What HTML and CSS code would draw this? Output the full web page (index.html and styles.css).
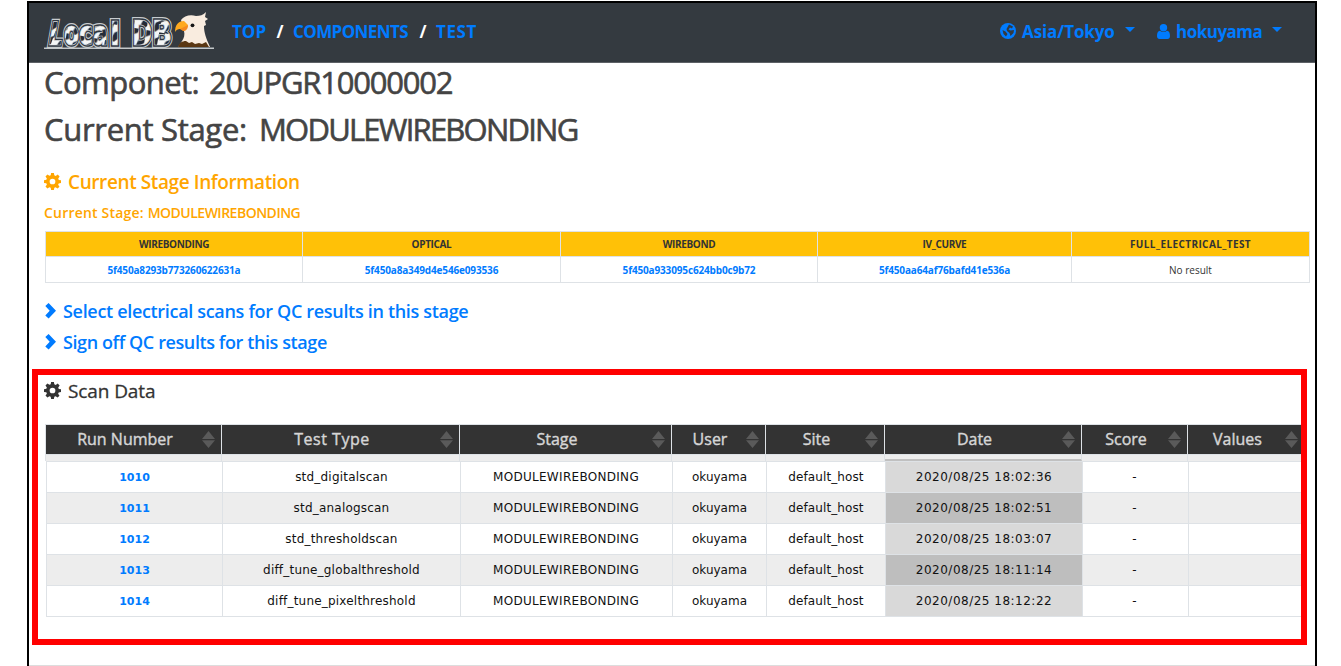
FILE: index.html
```
<!DOCTYPE html>
<html lang="en">
<head>
<meta charset="utf-8">
<title>LocalDB - Component</title>
<link rel="stylesheet" href="styles.css">
</head>
<body>
<svg class="defs" width="0" height="0" aria-hidden="true">
  <symbol id="gear" viewBox="0 0 16 16"><path fill-rule="evenodd" d="M6.700 0h2.600l.4 2.200 1.300.6 1.900-1.300 1.800 1.800-1.300 1.900.5 1.300 2.100.3v2.600l-2.200.4-.5 1.200 1.300 1.900-1.800 1.800-1.900-1.300-1.200.5-.4 2.100H6.700l-.4-2.200-1.200-.5-1.900 1.300-1.800-1.800L2.700 11l-.5-1.300L0 9.400V6.800l2.200-.4.5-1.300-1.300-1.900 1.800-1.800L5.100 2.700l1.200-.5zM8 5.300a2.700 2.700 0 1 0 0 5.400 2.700 2.700 0 0 0 0-5.400z"/></symbol>
  <symbol id="chevron" viewBox="0 0 11 16"><path d="M3.600 0L11 7.800 3.600 15.600.3 12.500l4.400-4.700L.3 3.100z"/></symbol>
</svg>
<div class="page">
  <nav class="navbar">
    <svg class="logo" width="172" height="40" viewBox="0 0 172 40">
      <defs>
        <pattern id="zebra" width="13" height="17" patternUnits="userSpaceOnUse" patternTransform="rotate(10)">
          <rect width="13" height="17" fill="#f4f6f6"/>
          <path d="M0 0h6l-1 4-5 3zM8 8l5-3v8l-4 4H5z" fill="#252b36"/>
        </pattern>
        <g id="word">
          <text x="4" y="33" font-size="32" textLength="14" lengthAdjust="spacingAndGlyphs" transform="skewX(-10) translate(5 0)">L</text>
          <text x="20" y="33" font-size="33" textLength="15" lengthAdjust="spacingAndGlyphs">o</text>
          <text x="35" y="33" font-size="33" textLength="14" lengthAdjust="spacingAndGlyphs">c</text>
          <text x="49" y="33" font-size="33" textLength="15" lengthAdjust="spacingAndGlyphs">a</text>
          <text x="66" y="33" font-size="32" textLength="10" lengthAdjust="spacingAndGlyphs">l</text>
          <text x="88" y="33" font-size="33" textLength="20" lengthAdjust="spacingAndGlyphs">D</text>
          <text x="108" y="33" font-size="33" textLength="20" lengthAdjust="spacingAndGlyphs">B</text>
        </g>
      </defs>
      <g class="logo-text">
        <use href="#word" fill="none" stroke="#c8cccf" stroke-width="6"/>
        <use href="#word" fill="none" stroke="#2f3640" stroke-width="3.600"/>
        <use href="#word" fill="url(#zebra)" stroke="#d5d8da" stroke-width=".7"/>
      </g>
      <path d="M0 36.300h170" stroke="#c4c8ca" stroke-width="1.400"/>
      <path d="M134 35l4-6c2-3 3-6 2-10l-3-11c3-4 9-6 15-4 4 0 7-1 10-4l-1 5 3 2-3 2 1 4-2 1c0 7 2 12 6 21z" fill="#f9ecdf"/>
      <path d="M134 35c1-4 4-6 8-6l3 2 3-1 3 2 4-1 3 1 4-2 3 5z" fill="#5a3713"/>
      <path d="M131 20c0-7 3-11 9-11l4 4c-1 4-4 5-8 4-2 0-4 1-5 3z" fill="#ffa91f"/>
      <path d="M136 17l8-4c0 4-2 6-5 6z" fill="#f58a20"/>
      <circle cx="148.500" cy="13.300" r="1.900" fill="#161616"/>
    </svg>
    <div class="crumbs">
      <a class="c-top">TOP</a><span>/</span><a class="c-comp">COMPONENTS</a><span>/</span><a class="c-test">TEST</a>
    </div>
    <div class="menus">
      <a class="menu">
        <svg width="16" height="16" viewBox="0 0 16 16"><circle cx="8" cy="8" r="8" fill="#007bff"/><path d="M9 1.500l4 2-1 2-2-1-1.500 2 2 1 3.500-.5-.5 3-3 3-1-3L7 8l-.5-2zM2.500 7l3 1.500L7.500 11 6 13.500 3.500 11z" fill="#343a40"/></svg>
        <span class="tz">Asia/Tokyo</span><i class="caret"></i>
      </a>
      <a class="menu">
        <svg width="13" height="15" viewBox="0 0 13 15"><circle cx="6.500" cy="3.700" r="3.700" fill="#007bff"/><path d="M0 12c0-3 .9-5 3-5.200 2 1.700 5 1.700 7 0 2.100.2 3 2.200 3 5.200 0 2-1 3-2.500 3h-8C1 15 0 14 0 12z" fill="#007bff"/></svg>
        <span class="who">hokuyama</span><i class="caret"></i>
      </a>
    </div>
  </nav>

  <main>
    <div class="intro">
      <h1><span class="label-a">Componet: </span><span class="serial">20UPGR10000002</span></h1>
      <h1 class="stage"><span class="label-b">Current Stage: </span><span class="name">MODULEWIREBONDING</span></h1>
      <h2 class="warn"><svg class="gear"><use href="#gear"/></svg><span>Current Stage Information</span></h2>
      <h3 class="warn">Current Stage: <span>MODULEWIREBONDING</span></h3>
      <table class="qc">
        <colgroup><col class="q1"><col class="q2"><col class="q3"><col class="q4"><col class="q5"></colgroup>
        <tr><th>WIREBONDING</th><th>OPTICAL</th><th>WIREBOND</th><th>IV_CURVE</th><th class="wide">FULL_ELECTRICAL_TEST</th></tr>
        <tr><td><a>5f450a8293b773260622631a</a></td><td><a>5f450a8a349d4e546e093536</a></td><td><a>5f450a933095c624bb0c9b72</a></td><td><a>5f450aa64af76bafd41e536a</a></td><td>No result</td></tr>
      </table>
      <div class="links">
        <a class="l1"><svg class="chev"><use href="#chevron"/></svg><span>Select electrical scans for QC results in this stage</span></a>
        <a class="l2"><svg class="chev"><use href="#chevron"/></svg><span>Sign off QC results for this stage</span></a>
      </div>
    </div>

    <section class="scan">
      <h2><svg class="gear"><use href="#gear"/></svg><span>Scan Data</span></h2>
      <div class="row head">
        <div><span>Run Number</span><i class="sort"></i></div><div class="tt"><span>Test Type</span><i class="sort"></i></div><div><span>Stage</span><i class="sort"></i></div><div><span>User</span><i class="sort"></i></div><div><span>Site</span><i class="sort"></i></div><div><span>Date</span><i class="sort"></i></div><div><span>Score</span><i class="sort"></i></div><div><span>Values</span><i class="sort"></i></div>
      </div>
      <div class="row strip"><div></div><div></div><div></div><div></div><div></div><div></div><div></div><div></div></div>
      <div class="body">
        <div class="row"><div><a>1010</a></div><div>std_digitalscan</div><div>MODULEWIREBONDING</div><div>okuyama</div><div>default_host</div><div>2020/08/25 18:02:36</div><div>-</div><div></div></div>
        <div class="row"><div><a>1011</a></div><div>std_analogscan</div><div>MODULEWIREBONDING</div><div>okuyama</div><div>default_host</div><div>2020/08/25 18:02:51</div><div>-</div><div></div></div>
        <div class="row"><div><a>1012</a></div><div>std_thresholdscan</div><div>MODULEWIREBONDING</div><div>okuyama</div><div>default_host</div><div>2020/08/25 18:03:07</div><div>-</div><div></div></div>
        <div class="row"><div><a>1013</a></div><div>diff_tune_globalthreshold</div><div>MODULEWIREBONDING</div><div>okuyama</div><div>default_host</div><div>2020/08/25 18:11:14</div><div>-</div><div></div></div>
        <div class="row"><div><a>1014</a></div><div>diff_tune_pixelthreshold</div><div>MODULEWIREBONDING</div><div>okuyama</div><div>default_host</div><div>2020/08/25 18:12:22</div><div>-</div><div></div></div>
      </div>
    </section>
    <footer></footer>
  </main>
</div>
</body>
</html>
```
FILE: styles.css
```
* { box-sizing: border-box; }
html { overflow: hidden; }
body {
  margin: 0;
  height: 666px;
  overflow: hidden;
  padding: 1px 24px 0 27px;
  background: #fff;
  font-family: "Open Sans", "Noto Sans", sans-serif;
  color: #333;
}
.defs { display: block; height: 0; }
.page { height: 670px; border: 2px solid #000; border-bottom: 0; }
a { color: #007bff; text-decoration: none; }
h1, h2, h3 { margin: 0; font-weight: 400; white-space: nowrap; }

/* Navigation bar */
.navbar {
  display: flex;
  align-items: flex-start;
  height: 60px;
  background: #343a40;
  border-bottom: 1px solid #5d6166;
  padding: 9px 33px 0 15px;
}
.logo { flex: none; }
.logo-text { font-family: "DejaVu Sans", sans-serif; font-weight: 700; }
.crumbs {
  display: flex;
  margin-left: 16px;
  height: 39px;
  align-items: center;
  font-size: 17px;
  font-weight: 700;
  color: #fff;
}
.crumbs a { white-space: nowrap; }
.crumbs span { width: 26px; text-align: center; }
.c-top { width: 35px; }
.c-comp { width: 117px; letter-spacing: -.6px; }
.c-test { letter-spacing: .6px; }
.menus { display: flex; gap: 22px; margin-left: auto; height: 38px; align-items: center; }
.menu { display: flex; align-items: center; font-size: 17px; font-weight: 700; }
.menu span { white-space: nowrap; }
.tz { margin-left: 6px; width: 103px; letter-spacing: -.1px; }
.who { margin-left: 6px; width: 96px; letter-spacing: -.5px; }
.caret { border: 5px solid transparent; border-top-color: #007bff; border-bottom: 0; margin-top: -3px; }

/* Component heading and current stage */
.intro { padding: 0 6px 0 16px; height: 306px; }
h1 {
  display: flex;
  height: 38px;
  line-height: 38px;
  font-size: 31px;
  color: #444;
  margin-left: -1px;
  -webkit-text-stroke: .6px #444;
}
h1.stage { height: 56px; line-height: 56px; }
.label-a { width: 165px; letter-spacing: -.55px; }
.serial { letter-spacing: -1.200px; }
.label-b { width: 215px; letter-spacing: -.3px; }
.name { font-size: 31px; letter-spacing: -1.780px; }
h2 { display: flex; align-items: center; font-size: 19px; }
.warn { color: #ffa500; font-weight: 600; }
.warn .gear { fill: #ffa500; }
h2.warn { height: 49px; letter-spacing: -.4px; }
h3.warn { height: 25px; line-height: 13px; font-size: 14px; margin-left: -1px; letter-spacing: .2px; }
h3.warn span { letter-spacing: -.5px; }
.gear { width: 17px; height: 17px; margin: 0 7px 0 -1px; fill: #333; flex: none; }
.qc {
  border-collapse: collapse;
  table-layout: fixed;
  width: 1264px;
  font-size: 10px;
  text-align: center;
}
.qc th, .qc td { border: 1px solid #dee2e6; padding: 0; line-height: 12px; }
.qc th { height: 25px; background: #ffc107; font-size: 10px; letter-spacing: -.35px; }
.qc th.wide { letter-spacing: .4px; }
.qc td { height: 26px; }
.qc a { font-weight: 700; letter-spacing: -.15px; }
.q1 { width: 257px; }
.q2 { width: 258px; }
.q3 { width: 257px; }
.q4 { width: 254px; }
.q5 { width: 238px; }
.links { margin-top: 13px; font-size: 18px; font-weight: 600; }
.links a { display: flex; align-items: center; height: 30.500px; white-space: nowrap; }
.l1 { letter-spacing: -.32px; }
.l2 { letter-spacing: -.4px; }
.chev { width: 11px; height: 16px; margin-right: 7px; fill: #007bff; flex: none; }

/* Scan data, outlined in red */
.scan {
  width: 1275px;
  height: 276px;
  margin-left: 3px;
  border: 6px solid #f00;
  padding-left: 7px;
  overflow: hidden;
}
.scan h2 { height: 31px; margin-bottom: 18px; letter-spacing: -.1px; -webkit-text-stroke: .3px #333; }
.row {
  display: grid;
  grid-template-columns: 176px 238px 212px 94px 119px 197px 106px 117px;
  width: 1260px;
  border-left: 1px solid #dee2e6;
}
.row > div {
  display: flex;
  align-items: center;
  justify-content: center;
  border-right: 1px solid #dee2e6;
  white-space: nowrap;
}
.head { height: 31px; border-top: 1px solid #dee2e6; border-bottom: 1px solid #dee2e6; }
.head > div {
  display: grid;
  grid-template-columns: 1fr 13px;
  background: #333;
  color: #d6d6d6;
  font-size: 16px;
  text-align: center;
  padding-right: 6px;
  -webkit-text-stroke: .4px #d6d6d6;
}
.head span { margin: -2px 0 0 2px; }
.head .tt { letter-spacing: .5px; }
.sort {
  width: 13px;
  height: 17px;
  background: #5a5a5a;
  clip-path: polygon(50% 0, 100% 47%, 0 47%, 0 55%, 100% 55%, 50% 100%, 0 55%, 0 47%);
}
.strip { height: 6px; background: #ededed; }
.strip > div:nth-child(6) { border-bottom: 2px solid #c0c0c0; }
.body {
  margin-left: 1px;
  border-top: 1px solid #dee2e6;
  font-family: "DejaVu Sans", sans-serif;
  font-size: 12px;
  color: #111;
}
.body .row { height: 31px; border-bottom: 1px solid #dee2e6; }
.body .row > div:nth-child(2) { letter-spacing: .2px; }
.body .row > div:nth-child(3) { letter-spacing: .3px; padding-right: 1px; }
.body .row > div:nth-child(5) { letter-spacing: .1px; }
.body .row > div:nth-child(6) { letter-spacing: .5px; background: #d9d9d9; }
.body .row > div:nth-child(7) { padding-right: 2px; }
.body .row:nth-child(even) { background: #ededed; }
.body .row:nth-child(even) > div:nth-child(6) { background: #bebebe; }
.body a { font-size: 11px; font-weight: 700; }
footer { margin-top: 20px; border-top: 1px solid #ddd; }
```
